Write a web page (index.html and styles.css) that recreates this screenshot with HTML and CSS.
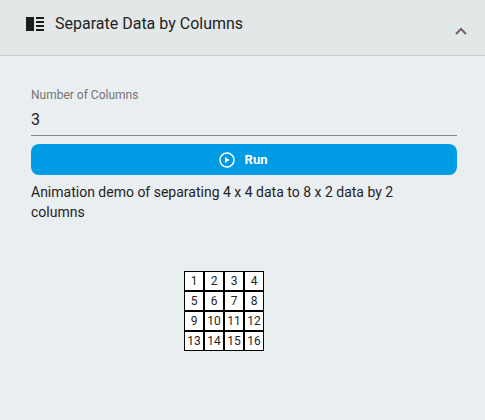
FILE: index.html
```html
<!DOCTYPE html>
<html lang="en">
<head>
    <meta charset="utf-8">
    <title>Separate Data by Columns</title>
    <link rel="stylesheet" href="styles.css">
</head>
<body>
    <div class="panel">
        <button class="panel-header" type="button" aria-expanded="true" aria-controls="content">
            <svg class="icon" width="18" height="14" viewBox="0 0 18 14" aria-hidden="true">
                <path d="M0 0h8v14H0zM10 0h8v2h-8zM10 4h8v2h-8zM10 8h8v2h-8zM10 12h8v2h-8z" fill="#1b1d1e"/>
            </svg>
            <span class="title">Separate Data by Columns</span>
            <svg class="arrow" width="12" height="8" viewBox="0 0 12 8" aria-hidden="true">
                <path d="M1 7l5-5 5 5" fill="none" stroke="#75606d" stroke-width="2"/>
            </svg>
        </button>
        <div class="content" id="content">
            <label class="label" for="columns">Number of Columns</label>
            <input class="input" id="columns" type="text" inputmode="numeric" value="3">
            <button class="run" type="button">
                <svg width="16" height="16" viewBox="0 0 16 16" aria-hidden="true">
                    <circle cx="8" cy="8" r="7" fill="none" stroke="#ffffff" stroke-width="1.5"/>
                    <path d="M6 5v6L10.500 8z" fill="#ffffff"/>
                </svg>
                <span>Run</span>
            </button>
            <div class="example">
                <p class="desc">Animation demo of separating 4 x 4 data to 8 x 2 data by 2 columns</p>
                <table class="demo">
                    <tr><td>1</td><td>2</td><td>3</td><td>4</td></tr>
                    <tr><td>5</td><td>6</td><td>7</td><td>8</td></tr>
                    <tr><td>9</td><td>10</td><td>11</td><td>12</td></tr>
                    <tr><td>13</td><td>14</td><td>15</td><td>16</td></tr>
                </table>
            </div>
        </div>
    </div>
</body>
</html>
```

FILE: styles.css
```css
* {
    box-sizing: border-box;
}

body {
    margin: 0;
    font-family: Roboto, Arial, sans-serif;
    background-color: #e9eef1;
    color: #1f2224;
}

button,
input {
    font-family: inherit;
    color: inherit;
}

.panel-header {
    display: flex;
    align-items: center;
    width: 100%;
    padding: 12px 18px 20px 26px;
    border: none;
    border-bottom: 1px solid #c8d0d0;
    background-color: #e2e8e8;
    text-align: left;
    cursor: pointer;
}

.title {
    flex: 1;
    margin-left: 11px;
    font-size: 16px;
    line-height: 23px;
}

.arrow {
    align-self: flex-end;
}

.content {
    padding: 31px 28px 0 31px;
}

.label {
    display: block;
    font-size: 12px;
    line-height: 16px;
    color: #7b7273;
}

.input {
    display: block;
    width: 100%;
    height: 33px;
    padding: 0;
    border: none;
    border-bottom: 1px solid #838789;
    border-radius: 0;
    background: transparent;
    font-size: 16px;
    outline: none;
}

.run {
    display: flex;
    align-items: center;
    justify-content: center;
    gap: 10px;
    width: 100%;
    height: 31px;
    margin-top: 8px;
    padding: 0 8px 0 6px;
    border: none;
    border-radius: 8px;
    background-color: #009be5;
    color: #ffffff;
    font-size: 13px;
    font-weight: bold;
    cursor: pointer;
}

.example {
    padding: 7px 40px 0 0;
}

.desc {
    margin: 0;
    font-size: 14px;
    line-height: 20px;
}

.demo {
    margin: 49px auto 0;
    border-collapse: separate;
    border-spacing: 0;
    font-size: 12px;
}

.demo td {
    width: 20px;
    height: 20px;
    padding: 0;
    border: 1px solid #000000;
    background-color: #ffffff;
    text-align: center;
}
```
